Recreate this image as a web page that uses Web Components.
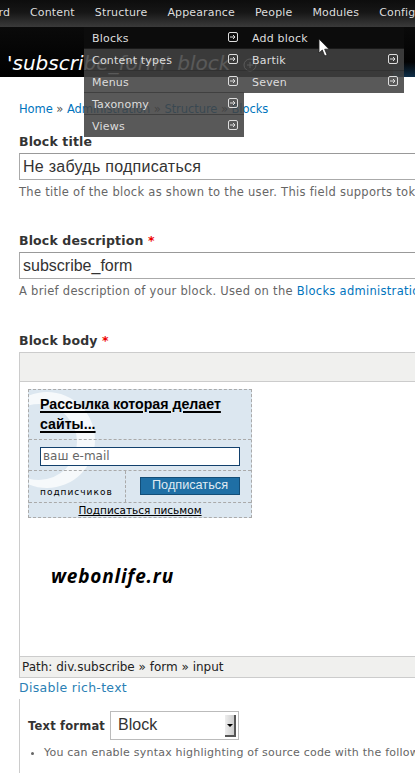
<!DOCTYPE html>
<html>
<head>
<meta charset="utf-8">
<title>Block</title>
<style>
  html, body { margin: 0; padding: 0; width: 415px; height: 773px; overflow: hidden; background: #fff; }
  body { font-family: "DejaVu Sans", sans-serif; position: relative; }
</style>
</head>
<body>
<admin-toolbar></admin-toolbar>
<page-title>'subscribe_form' block</page-title>
<form-page></form-page>
<fly-menu></fly-menu>

<script>
const ARROW = `<svg width="10" height="10" viewBox="0 0 10 10" fill="none" stroke="#ddd"><rect x=".5" y=".5" width="9" height="9" rx="1.5"/><path d="M2 5h5M5 3l2 2-2 2"/></svg>`;

class AdminToolbar extends HTMLElement {
  connectedCallback() {
    this.attachShadow({ mode: 'open' });
    this.shadowRoot.innerHTML = `
      <style>
        :host { display: block; height: 27px; overflow: hidden; background: linear-gradient(#0d0d0d 0, #161616 45%, #3a3a3a 100%); }
        nav { display: flex; width: 540px; margin-left: -61px; font: 11px/25px "DejaVu Sans", sans-serif; letter-spacing: .15px; color: #ddd; }
        a { padding: 0 10px; white-space: nowrap; }
      </style>
      <nav>
        <a>Dashboard</a><a>Content</a><a>Structure</a><a>Appearance</a><a>People</a><a>Modules</a><a>Configuration</a>
      </nav>`;
  }
}

class PageTitle extends HTMLElement {
  connectedCallback() {
    this.attachShadow({ mode: 'open' });
    this.shadowRoot.innerHTML = `
      <style>
        :host { display: block; height: 50px; box-sizing: border-box; padding: 24px 0 0 7px; overflow: hidden; white-space: nowrap;
          background: linear-gradient(transparent 70%, #10304a) right / 22px 100% no-repeat, linear-gradient(#0a0a0a, #000); color: #fff; font: italic 20px/24px "DejaVu Sans", sans-serif; }
        svg { vertical-align: -2px; margin-left: 6px; }
      </style>
      <slot></slot>
      <svg width="14" height="14" viewBox="0 0 14 14" fill="none" stroke="#fff"><circle cx="7" cy="7" r="6"/><path d="M4 7h6M7 4v6"/></svg>`;
  }
}

class FlyMenu extends HTMLElement {
  connectedCallback() {
    const row = (label, arrow, hot) => `<li class="${hot ? 'hot' : ''}"><span>${label}</span>${arrow ? ARROW : ''}</li>`;
    this.attachShadow({ mode: 'open' });
    this.shadowRoot.innerHTML = `
      <style>
        :host { display: block; }
        ul { position: absolute; top: 27px; width: 160px; margin: 0; padding: 0; list-style: none; font: 11px/22px "DejaVu Sans", sans-serif; letter-spacing: .2px; color: #ddd; }
        .one { left: 84px; }
        .two { left: 244px; }
        li { display: flex; justify-content: space-between; align-items: center; height: 22px; box-sizing: border-box; padding: 0 6px 0 8px; background: rgba(66, 66, 66, .88); border-bottom: 1px solid rgba(40, 40, 40, .5); }
        li span { position: relative; top: 1px; }
        li svg { margin-top: -2px; }
        li:last-child { border-bottom: 0; }
        li.hot { background: rgba(12, 12, 12, .96); }
        .cursor { position: absolute; left: 318px; top: 38px; }
      </style>
      <ul class="one">
        ${row('Blocks', true, true)}${row('Content types', true)}${row('Menus', true)}${row('Taxonomy', true)}${row('Views', true)}
      </ul>
      <ul class="two">
        ${row('Add block', false, true)}${row('Bartik', true)}${row('Seven', true)}
      </ul>
      <svg class="cursor" width="13" height="20" viewBox="0 0 13 20"><path d="M1 1v14l3.3-3 2.4 6 2.4-1-2.4-5.8H11z" fill="#fff" stroke="#222" stroke-width=".8"/></svg>`;
  }
}

class FormField extends HTMLElement {
  connectedCallback() {
    const req = this.hasAttribute('required') ? ' <b>*</b>' : '';
    this.attachShadow({ mode: 'open' });
    this.shadowRoot.innerHTML = `
      <style>
        :host { display: block; margin-bottom: 33px; }
        label { display: block; font: bold 12.5px/16px "DejaVu Sans", sans-serif; color: #333; margin-bottom: 3px; letter-spacing: .15px; }
        label b { color: #e00; }
        .box { height: 27px; box-sizing: border-box; width: 700px; border: 1px solid #aaa; border-top-color: #999; padding: 0 3px; font: 16px/25px "Liberation Sans", sans-serif; letter-spacing: var(--track, 0); color: #333; }
        p { margin: 4px 0 0; font: 11.5px/16px "DejaVu Sans", sans-serif; color: #666; white-space: nowrap; letter-spacing: .29px; }
        ::slotted(a) { color: #0074bd; }
      </style>
      <label>${this.getAttribute('label')}${req}</label>
      <div class="box">${this.getAttribute('value')}</div>
      <p><slot></slot></p>`;
  }
}

class SubscribeWidget extends HTMLElement {
  connectedCallback() {
    this.attachShadow({ mode: 'open' });
    this.shadowRoot.innerHTML = `
      <style>
        :host { display: block; position: relative; width: 224px; height: 129px; box-sizing: border-box; overflow: hidden; border: 1px dashed #aaa; background: #dce7f0; color: #000; font-family: "Liberation Sans", sans-serif; }
        .swirl { position: absolute; left: 0; top: 0; }
        .head, .mail, .bottom, .letter { position: relative; box-sizing: border-box; border-bottom: 1px dashed #aaa; }
        .head { height: 50px; padding: 4px 11px 0; font: bold 14.2px/20px "Liberation Sans", sans-serif; }
        .head u { text-decoration-thickness: 1.5px; text-underline-offset: 2px; }
        .mail { height: 31px; padding: 7px 11px 0; }
        .mail div { height: 19px; box-sizing: border-box; border: 1px solid #12406c; background: #fff; padding-left: 2px; font: 12px/17px "DejaVu Sans", sans-serif; color: #666; }
        .bottom { display: flex; height: 32px; }
        .count { width: 97px; box-sizing: border-box; border-right: 1px dashed #aaa; padding: 15px 0 0 11px; font: 9px/12px "DejaVu Sans", sans-serif; letter-spacing: 1px; white-space: nowrap; }
        .send { margin: 6px 0 0 14px; width: 100px; height: 18px; background: #1f6fa5; border: 1px solid #134e78; box-sizing: border-box; color: #dfeaf2; text-align: center; font: 12.7px/15px "Liberation Sans", sans-serif; }
        .letter { border: 0; text-align: center; font: 10.5px/15px "DejaVu Sans", sans-serif; text-decoration: underline; }
      </style>
      <svg class="swirl" width="110" height="110" viewBox="0 0 110 110"><path fill="#f6f9fb" fill-rule="evenodd" d="M18 2a48 48 0 1 1 0 96a48 48 0 1 1 0-96zM10 14a38 38 0 1 0 0 76a38 38 0 1 0 0-76z"/></svg>
      <div class="head"><u>Рассылка которая делает сайты...</u></div>
      <div class="mail"><div>ваш e-mail</div></div>
      <div class="bottom"><div class="count">подписчиков</div><div class="send">Подписаться</div></div>
      <div class="letter">Подписаться письмом</div>`;
  }
}

class RichEditor extends HTMLElement {
  connectedCallback() {
    this.attachShadow({ mode: 'open' });
    this.shadowRoot.innerHTML = `
      <style>
        :host { display: block; width: 700px; border: 1px solid #ccc; box-sizing: border-box; }
        .tools { height: 28px; background: #f0f0ee; border-bottom: 1px solid #ccc; box-sizing: content-box; }
        .body { height: 274px; box-sizing: border-box; padding: 7px 8px 0; }
        .brand { margin: 46px 0 0 23px; font: italic bold 19px/24px "Open Sans", sans-serif; letter-spacing: .8px; color: #000; }
        .path { height: 21px; box-sizing: border-box; background: #f0f0ee; border-top: 1px solid #ccc; padding-left: 2px; font: 12px/20px "DejaVu Sans", sans-serif; color: #222; }
      </style>
      <div class="tools"></div>
      <div class="body"><subscribe-widget></subscribe-widget><div class="brand">webonlife.ru</div></div>
      <div class="path">Path: div.subscribe » form » input</div>`;
  }
}

class FormatPicker extends HTMLElement {
  connectedCallback() {
    this.attachShadow({ mode: 'open' });
    this.shadowRoot.innerHTML = `
      <style>
        :host { display: block; border-left: 1px solid #ccc; padding: 12px 0 0 8px; white-space: nowrap; height: 80px; box-sizing: border-box; }
        .row { display: flex; align-items: center; gap: 5px; font: bold 11.5px/16px "DejaVu Sans", sans-serif; letter-spacing: .2px; color: #333; }
        .select { position: relative; width: 129px; height: 29px; box-sizing: border-box; border: 1px solid #bbb; padding-left: 7px; font: 16px/25px "Liberation Sans", sans-serif; letter-spacing: 0; font-weight: normal; color: #333; }
        .btn { position: absolute; right: 2px; top: 3px; width: 11px; height: 22px; background: linear-gradient(90deg, #eee, #ccc); border: 1px solid #555; border-width: 0 2px 2px 0; box-sizing: border-box; }
        .btn::after { content: ""; position: absolute; left: 2px; top: 9px; border: 3px solid transparent; border-top-color: #000; }
        ul { margin: 5px 0 0; padding: 0 0 0 16px; font: 11px/16px "DejaVu Sans", sans-serif; color: #666; letter-spacing: .22px; }
      </style>
      <div class="row">Text format <div class="select">Block<span class="btn"></span></div></div>
      <ul><li>You can enable syntax highlighting of source code with the following tags</li></ul>`;
  }
}

class FormPage extends HTMLElement {
  connectedCallback() {
    this.attachShadow({ mode: 'open' });
    this.shadowRoot.innerHTML = `
      <style>
        :host { display: block; padding: 24px 0 0 19px; width: 700px; }
        .crumbs { font: 11.5px/16px "DejaVu Sans", sans-serif; letter-spacing: -.06px; color: #555; margin-bottom: 17px; }
        .crumbs a { color: #0074bd; }
        .body-label { font: bold 12.5px/16px "DejaVu Sans", sans-serif; color: #333; margin-bottom: 3px; letter-spacing: .15px; }
        .body-label b { color: #e00; }
        .toggle { font: 12.5px/18px "DejaVu Sans", sans-serif; letter-spacing: .3px; margin: 1px 0 2px; color: #2a7fb5; }
      </style>
      <div class="crumbs"><a>Home</a> » <a>Administration</a> » <a>Structure</a> » <a>Blocks</a></div>
      <form-field label="Block title" value="Не забудь подписаться" style="--track:.27px">The title of the block as shown to the user. This field supports tokens.</form-field>
      <form-field label="Block description" value="subscribe_form" required style="margin-bottom:34px">A brief description of your block. Used on the <a style="color:#0074bd">Blocks administration page</a>.</form-field>
      <div class="body-label">Block body <b>*</b></div>
      <rich-editor></rich-editor>
      <div class="toggle">Disable rich-text</div>
      <format-picker></format-picker>`;
  }
}

customElements.define('subscribe-widget', SubscribeWidget);
customElements.define('rich-editor', RichEditor);
customElements.define('format-picker', FormatPicker);
customElements.define('form-field', FormField);
customElements.define('form-page', FormPage);
customElements.define('admin-toolbar', AdminToolbar);
customElements.define('page-title', PageTitle);
customElements.define('fly-menu', FlyMenu);
</script>
</body>
</html>
